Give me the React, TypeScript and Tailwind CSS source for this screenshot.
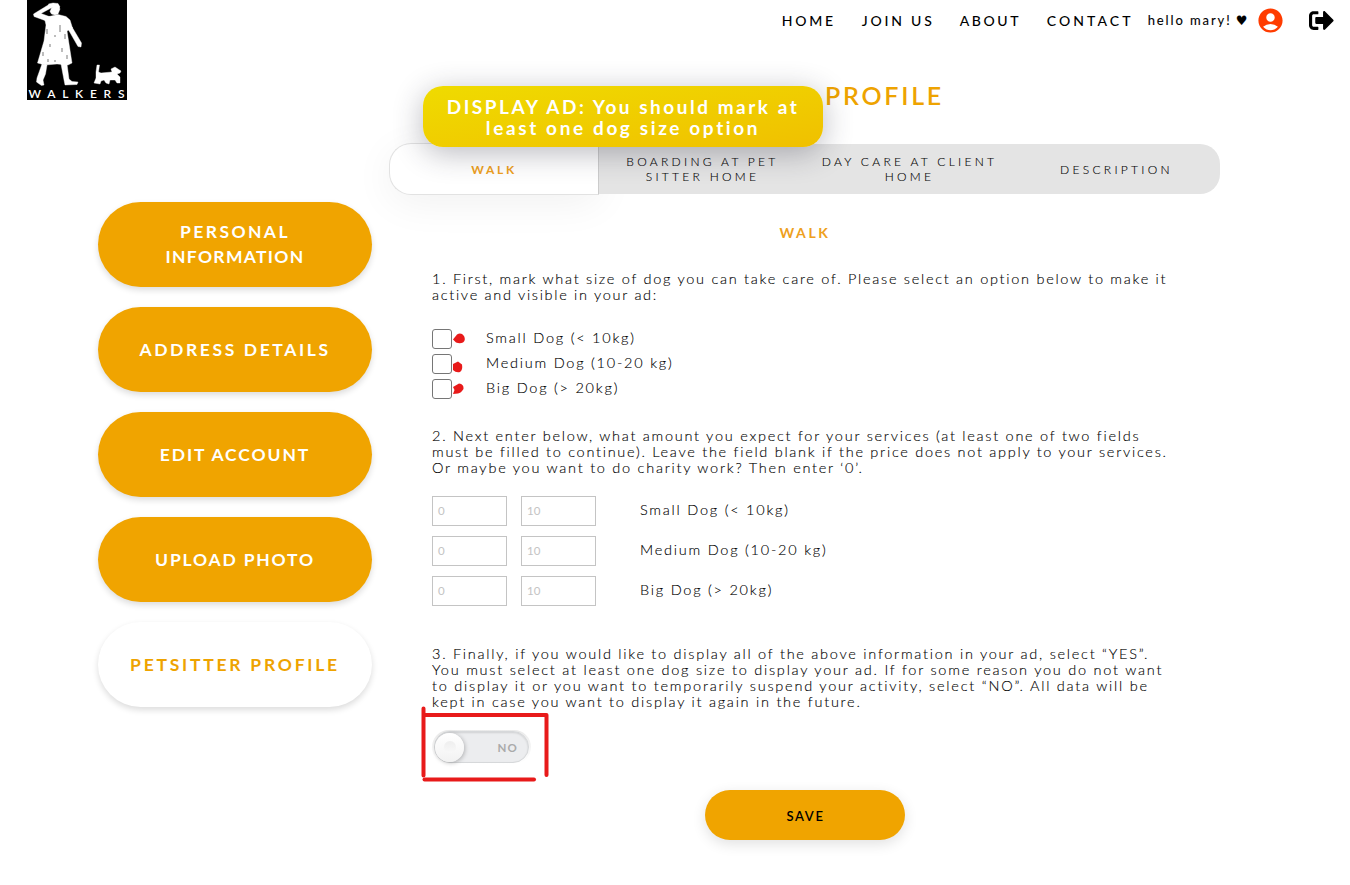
import React from "react";
import { MdAccountCircle } from "react-icons/md";
import { FaSignOutAlt } from "react-icons/fa";

function Logo() {
  return (
    <svg className="h-[100px] w-[100px] shrink-0" viewBox="0 0 100 100">
      <rect width="100" height="100" fill="#000" />
      <g fill="#fff" stroke="#fff" strokeWidth="0.4" strokeLinejoin="round">
        <path d="M24.500 8 L31 5 L33 9 L31 14 L28 15 L24.500 14 L23 11.500 Z" />
        <path d="M21.500 4 L26 3 L31 3.500 L33 7 L31 9 L24 7.500 Z" />
        <path d="M6.500 14 L22 4.500 L25 7.500 L14 13.500 L25 17.500 L22 22 L7 16.500 Z" />
        <path d="M22 16.500 L31 14.500 L39 16.500 L43 20 L45.500 28 L40 31 L45 63 L41 65 L30 64 L18 65 L10.500 63 L17 41 L19 25 L17.500 18.500 Z" />
        <path d="M41 29 L45 27 L54.500 43 L54 47 L51 46.500 L49 43 Z" />
        <path d="M15 64 L20 65 L18.500 74 L16 80 L17 85 L14.500 85.500 L9.500 82 L10 78 Z" />
        <path d="M34 64 L40 64 L42 79 L45 81.500 L51 82 L50 84.500 L38 85 L37 80 Z" />
        <path d="M70 65 L72.500 65 L71.500 72 L74 73 L85 72 L84 69 L88 67 L94 71 L93 73 L90 74 L93 77 L93 83 L90 83 L88 80 L83 80 L82 84 L79 83 L77 80 L74 81 L73 84 L67 83 L69 78 L69 72 Z" />
      </g>
      <path d="M20 29v5M33 25v7M38 34v5M23 44v3M35 48v4M28 35v2M21 59v3M40 55v4M16 52v4M28 60v2" stroke="#222" strokeWidth="0.6" fill="none" />
      <text x="1.500" y="97.500" fontSize="12" fontFamily="Lato, sans-serif" fontWeight="600" fill="#fff" textLength="96">WALKERS</text>
    </svg>
  );
}

const navItems = [
  { label: "HOME", cls: "mr-[26px] tracking-[2.7px]" },
  { label: "JOIN US", cls: "mr-[25px] tracking-[2.8px]" },
  { label: "ABOUT", cls: "mr-[25.500px] tracking-[2.6px]" },
  { label: "CONTACT", cls: "mr-[14px] tracking-[3.1px]" },
];

function Header() {
  return (
    <header className="flex h-[42px] items-start justify-between pl-[27px] pr-[16px]">
      <Logo />
      <nav className="flex h-[41px] items-center text-[14px] font-medium text-black">
        {navItems.map((n) => (
          <a key={n.label} className={n.cls}>{n.label}</a>
        ))}
        <span className="mr-[8px] text-[13px] font-normal tracking-[1.900px] [-webkit-text-stroke:0.1px]">
          hello mary! <span className="-ml-px font-['DejaVu_Sans'] tracking-normal">♥</span>
        </span>
        <MdAccountCircle className="mr-[24.500px] h-[29px] w-[29px] text-[#ff3c00]" />
        <FaSignOutAlt className="h-[25px] w-[25px]" />
      </nav>
    </header>
  );
}

const menu = [
  { lines: [{ t: "PERSONAL", cls: "tracking-[2.400px]" }, { t: "INFORMATION", cls: "tracking-[1.300px]" }], cls: "bg-[#f0a400] text-white" },
  { lines: [{ t: "ADDRESS DETAILS", cls: "tracking-[2.600px]" }], cls: "bg-[#f0a400] text-white" },
  { lines: [{ t: "EDIT ACCOUNT", cls: "tracking-[1.900px]" }], cls: "bg-[#f0a400] text-white" },
  { lines: [{ t: "UPLOAD PHOTO", cls: "tracking-[1.800px]" }], cls: "bg-[#f0a400] text-white" },
  { lines: [{ t: "PETSITTER PROFILE", cls: "tracking-[2.750px]" }], cls: "bg-white text-[#eea300]" },
];

function Sidebar() {
  return (
    <aside className="flex w-[274px] shrink-0 flex-col gap-5 pt-[160px]">
      {menu.map((m) => (
        <button
          key={m.lines[0].t}
          className={
            "flex h-[85px] flex-col items-center justify-center rounded-[43px] pb-px text-[17.500px] leading-[25px] font-bold shadow-[0_3px_6px_rgba(0,0,0,0.14)] " +
            m.cls
          }
        >
          {m.lines.map((l) => (
            <span key={l.t} className={l.cls}>{l.t}</span>
          ))}
        </button>
      ))}
    </aside>
  );
}

function Tabs() {
  return (
    <div className="flex h-[52px] w-[831px] items-center text-center text-[12px] leading-[15px] font-light tracking-[3.300px] text-black">
      <div className="flex h-[52px] w-[210px] shrink-0 items-center justify-center rounded-l-[22px] border border-[#e2e2e2] border-r-[#cccccc] bg-white font-bold tracking-[2.700px] text-[#eea020] shadow-[0_8px_40px_rgba(0,0,0,0.06)]">
        WALK
      </div>
      <div className="flex h-[50px] grow items-center rounded-r-[20px] bg-[#e4e4e4] [-webkit-text-stroke:0.12px]">
        <div className="w-[207px]">BOARDING AT PET<br />SITTER HOME</div>
        <div className="w-[207px]">DAY CARE AT CLIENT<br />HOME</div>
        <div className="w-[207px]">DESCRIPTION</div>
      </div>
    </div>
  );
}

type Line = { t: string; cls: string };

function Paragraph({ lines }: { lines: Line[] }) {
  return (
    <p className="flex flex-col leading-4 whitespace-nowrap">
      {lines.map((l) => (
        <span key={l.t} className={l.cls}>{l.t}</span>
      ))}
    </p>
  );
}

const sizes = ["Small Dog (< 10kg)", "Medium Dog (10-20 kg)", "Big Dog (> 20kg)"];

const first: Line[] = [
  { t: "1. First, mark what size of dog you can take care of. Please select an option below to make it", cls: "tracking-[1.720px]" },
  { t: "active and visible in your ad:", cls: "tracking-[1.700px]" },
];
const second: Line[] = [
  { t: "2. Next enter below, what amount you expect for your services (at least one of two fields", cls: "tracking-[1.740px]" },
  { t: "must be filled to continue). Leave the field blank if the price does not apply to your services.", cls: "tracking-[1.720px]" },
  { t: "Or maybe you want to do charity work? Then enter ‘0’.", cls: "tracking-[1.750px]" },
];
const third: Line[] = [
  { t: "3. Finally, if you would like to display all of the above information in your ad, select “YES”.", cls: "tracking-[1.740px]" },
  { t: "You must select at least one dog size to display your ad. If for some reason you do not want", cls: "tracking-[1.765px]" },
  { t: "to display it or you want to temporarily suspend your activity, select “NO”. All data will be", cls: "tracking-[1.770px]" },
  { t: "kept in case you want to display it again in the future.", cls: "tracking-[1.745px]" },
];

function Toggle() {
  return (
    <div className="flex h-[34px] w-[99px] items-center justify-center rounded-full bg-gradient-to-b from-[#eaeaea] to-white">
      <div className="flex h-[32px] w-[95px] items-center justify-between rounded-full border border-[#d6d8da] bg-[#ecedef] pr-[10px] shadow-[inset_0_1px_2px_rgba(0,0,0,0.12)]">
        <span className="flex h-[29px] w-[29px] items-center justify-center rounded-full bg-gradient-to-b from-white to-[#f2f2f2] shadow-[1px_1px_4px_rgba(0,0,0,0.25)]">
          <span className="h-3 w-3 rounded-full bg-gradient-to-b from-[#eeeeee] to-[#f8f8f8]" />
        </span>
        <span className="pt-px text-[11.500px] font-bold tracking-[1.200px] text-[#aaaaaa] [-webkit-text-stroke:0px]">NO</span>
      </div>
    </div>
  );
}

function PriceField({ value }: { value: string }) {
  return (
    <span className="flex h-[30px] w-[75px] items-center border border-[#c4c4c4] pl-[5px] text-[11.500px] font-normal tracking-normal text-[#c4c4c4] [-webkit-text-stroke:0px]">
      {value}
    </span>
  );
}

function Content() {
  return (
    <main className="flex w-[831px] flex-col">
      <h1 className="mt-[37px] h-[33px] pl-[436px] text-[25px] leading-[32px] font-semibold tracking-[2.750px] text-[#eea300]">PROFILE</h1>
      <div className="mt-[31px]"><Tabs /></div>
      <h2 className="mt-[28px] pl-px text-center text-[14px] leading-5 font-bold tracking-[2.600px] text-[#eea020]">WALK</h2>
      <div className="pt-[28px] pl-[43px] text-[14.500px] font-light text-black [-webkit-text-stroke:0.12px]">
        <Paragraph lines={first} />
        <div className="mt-[26px] flex flex-col gap-[5px]">
          {sizes.map((s) => (
            <label key={s} className="flex h-5 items-center gap-[34px] leading-5 tracking-[1.770px]">
              <span className="h-5 w-5 rounded-[3px] border border-[#767676] bg-white" />
              <span className="pb-[3px]">{s}</span>
            </label>
          ))}
        </div>
        <div className="mt-[29px]"><Paragraph lines={second} /></div>
        <div className="mt-5 flex flex-col gap-[10px]">
          {sizes.map((s) => (
            <div key={s} className="flex h-[30px] items-center tracking-[1.770px]">
              <PriceField value="0" />
              <span className="ml-[14px]"><PriceField value="10" /></span>
              <span className="ml-[44px] pb-[3px]">{s}</span>
            </div>
          ))}
        </div>
        <div className="mt-[40px]"><Paragraph lines={third} /></div>
        <div className="mt-[20px]"><Toggle /></div>
      </div>
      <button className="mt-[26px] h-[50px] w-[200px] self-center rounded-full bg-[#f0a400] pt-[3px] pl-[2px] text-[13px] font-semibold tracking-[1.650px] text-black shadow-[0_4px_14px_rgba(0,0,0,0.12)]">SAVE</button>
    </main>
  );
}

function Toast() {
  return (
    <div className="absolute left-[423px] top-[86px] flex h-[61px] w-[400px] flex-col items-center justify-center rounded-[20px] bg-gradient-to-br from-[#efdb00] to-[#f0c000] text-[19px] leading-[21px] font-bold whitespace-nowrap text-white shadow-[0_6px_30px_rgba(40,40,60,0.32)]">
      <span className="tracking-[2.520px]">DISPLAY AD: You should mark at</span>
      <span className="tracking-[2.620px]">least one dog size option</span>
    </div>
  );
}

function Marks() {
  return (
    <svg className="pointer-events-none absolute left-0 top-0" width="1350" height="885" fill="none">
      <g fill="#e81a1a">
        <path d="M453 339.500L457 334.500Q461 332 464 336Q466 340 463 342.500Q460 344 456 342.500Z" />
        <path d="M453 364L458 361.500L462 364.500Q463 370 460 372Q456 373 453 370Z" />
        <path d="M453 387L459 383.500Q464 384 463.500 389Q461 393 458 393.500L453 394L454.500 390Z" />
      </g>
      <g stroke="#e81a1a" strokeWidth="4" strokeLinecap="round" strokeLinejoin="round">
        <path d="M423.500 708.500V775.500M423.500 715H546.500V775" />
        <path d="M424.500 779.500H534" />
      </g>
    </svg>
  );
}

export default function App() {
  return (
    <div className="relative h-[885px] w-[1350px] overflow-hidden bg-white font-[Lato,sans-serif]">
      <Header />
      <div className="flex gap-[17px] pl-[98px]">
        <Sidebar />
        <Content />
      </div>
      <Toast />
      <Marks />
    </div>
  );
}
